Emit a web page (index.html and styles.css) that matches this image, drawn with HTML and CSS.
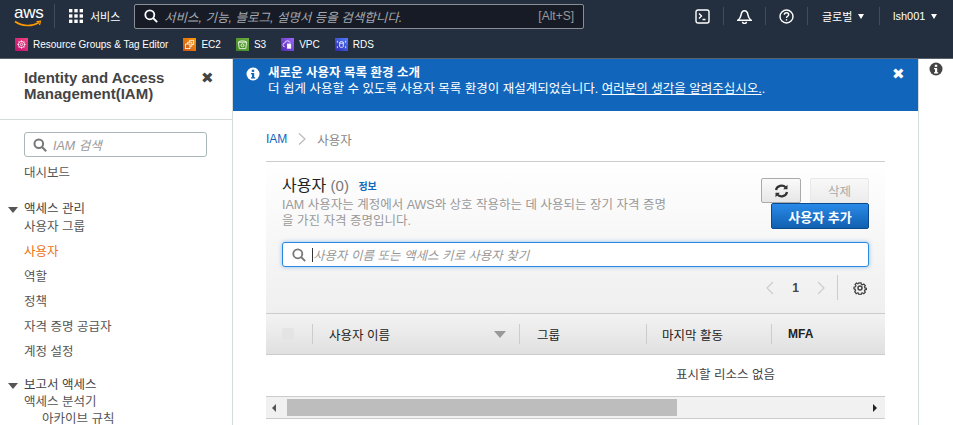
FILE: index.html
```html
<!DOCTYPE html>
<html lang="ko">
<head>
  <meta charset="UTF-8">
  <title>IAM 사용자</title>
  <link rel="stylesheet" href="styles.css">
</head>
<body>
  <!-- Top navigation -->
  <header class="topbar">
    <div class="toprow">
      <div class="logo">
        <span class="logo-text">aws</span>
        <svg class="logo-smile" width="28" height="8" viewBox="0 0 28 8"><path d="M1 1.5C8 6.5 18 6.8 25 2.5" fill="none" stroke="#f90" stroke-width="1.6"/><path d="M22.5 1.5L26.5 1.2 25.5 5" fill="none" stroke="#f90" stroke-width="1.2"/></svg>
      </div>
      <div class="services">
        <svg width="14" height="14" viewBox="0 0 14 14" fill="#fff"><rect x="0" y="0" width="3.4" height="3.4"/><rect x="5.3" y="0" width="3.4" height="3.4"/><rect x="10.6" y="0" width="3.4" height="3.4"/><rect x="0" y="5.3" width="3.4" height="3.4"/><rect x="5.3" y="5.3" width="3.4" height="3.4"/><rect x="10.6" y="5.3" width="3.4" height="3.4"/><rect x="0" y="10.6" width="3.4" height="3.4"/><rect x="5.3" y="10.6" width="3.4" height="3.4"/><rect x="10.6" y="10.6" width="3.4" height="3.4"/></svg>
        <span>서비스</span>
      </div>
      <div class="topsearch">
        <svg width="14" height="14" viewBox="0 0 14 14" fill="none" stroke="#fff" stroke-width="1.8"><circle cx="5.8" cy="5.8" r="4.5"/><path d="M9 9l4.2 4.2"/></svg>
        <span class="topsearch-text">서비스, 기능, 블로그, 설명서 등을 검색합니다.</span>
        <span class="shortcut">[Alt+S]</span>
      </div>
      <div class="topicons">
        <div class="topicon first">
          <svg width="15" height="15" viewBox="0 0 15 15" fill="none" stroke="#fff" stroke-width="1.4"><rect x="1" y="1" width="13" height="13" rx="2"/><path d="M4 4.5l2.5 2.5L4 9.5M7.5 10.5h3"/></svg>
        </div>
        <div class="topicon">
          <svg width="15" height="15" viewBox="0 0 15 15" fill="none" stroke="#fff" stroke-width="1.5"><path d="M1 11.2c2-1.4 2.6-2.5 3-5 .4-2.6 1.6-4.4 3.5-4.4s3.100 1.800 3.500 4.400c.4 2.500 1 3.600 3 5z"/><path d="M5.500 12.800a2 1.600 0 0 0 4 0"/></svg>
        </div>
        <div class="topicon">
          <svg width="15" height="15" viewBox="0 0 15 15" fill="none" stroke="#fff" stroke-width="1.400"><circle cx="7.500" cy="7.500" r="6.500"/><path d="M5.300 5.800c0-1.300 1-2.100 2.200-2.100s2.200.8 2.200 2c0 1.600-2.200 1.600-2.200 3.300"/><path d="M7.500 10.200v1.400"/></svg>
        </div>
        <div class="topmenu region">글로벌 <i class="caret"></i></div>
        <div class="topmenu user">lsh001 <i class="caret"></i></div>
      </div>
    </div>
    <div class="favorites">
      <a class="fav fav-rg"><svg width="12" height="12" viewBox="0 0 12 12" fill="none" stroke="#fff" stroke-width=".8"><circle cx="6" cy="6" r="3.500"/><circle cx="6" cy="6" r="1.300"/><path d="M6 1.500v2M6 8.500v2M1.500 6h2M8.500 6h2M2.800 2.800l1.400 1.400M7.800 7.800l1.400 1.400M9.200 2.800L7.800 4.200M4.200 7.800L2.800 9.200"/></svg>Resource Groups &amp; Tag Editor</a>
      <a class="fav fav-ec2"><svg width="12" height="12" viewBox="0 0 12 12" fill="none" stroke="#fff" stroke-width=".9"><rect x="1.500" y="5.500" width="5" height="5"/><path d="M4 5.500V3.500h4.500V8h-2"/><path d="M6 3.500V1.500h4.500V6H8.500"/></svg>EC2</a>
      <a class="fav fav-s3"><svg width="12" height="12" viewBox="0 0 12 12" fill="none" stroke="#fff" stroke-width=".9"><path d="M1.500 3.500h9l-1 7h-7zM1.500 3.500C3 1.500 9 1.500 10.500 3.500"/><circle cx="6" cy="6.800" r="1.600"/></svg>S3</a>
      <a class="fav fav-vpc"><svg width="12" height="12" viewBox="0 0 12 12" fill="none" stroke="#fff" stroke-width=".9"><path d="M3 8.500a2 2 0 0 1 0-4 3 3 0 0 1 5.800-.5"/><rect x="6" y="5.500" width="3.500" height="4.500" fill="#fff"/></svg>VPC</a>
      <a class="fav fav-rds"><svg width="12" height="12" viewBox="0 0 12 12" fill="none" stroke="#fff" stroke-width=".9"><ellipse cx="6" cy="3.800" rx="2" ry="1"/><path d="M4 3.800v4.400c0 1.300 4 1.300 4 0V3.800M1.500 2v2M1.500 8v2M10.500 2v2M10.500 8v2"/></svg>RDS</a>
    </div>
  </header>

  <div class="layout">
    <!-- Side navigation -->
    <nav class="sidenav">
      <div class="sidenav-head">
        <h2>Identity and Access Management(IAM)</h2>
        <span class="side-close">✖</span>
      </div>
      <div class="sidenav-body">
        <div class="side-search">
          <svg width="14" height="14" viewBox="0 0 14 14" fill="none" stroke="#777" stroke-width="2"><circle cx="5.800" cy="5.800" r="4.300"/><path d="M9 9l4.200 4.200"/></svg>
          <span>IAM 검색</span>
        </div>
        <a class="side-link dash">대시보드</a>
        <div class="side-section"><i class="side-caret"></i>액세스 관리</div>
        <a class="side-link first">사용자 그룹</a>
        <a class="side-link active">사용자</a>
        <a class="side-link">역할</a>
        <a class="side-link">정책</a>
        <a class="side-link">자격 증명 공급자</a>
        <a class="side-link">계정 설정</a>
        <div class="side-section report"><i class="side-caret"></i>보고서 액세스</div>
        <a class="side-link first">액세스 분석기</a>
        <a class="side-link sub">아카이브 규칙</a>
      </div>
    </nav>

    <main class="main">
      <!-- Flash message -->
      <div class="flash">
        <svg class="flash-icon" width="14" height="14" viewBox="0 0 14 14"><circle cx="7" cy="7" r="6.500" fill="#fff"/><rect x="5.800" y="2.700" width="2.400" height="2.200" fill="#1166bb"/><path d="M5 6h3.200v4.200h1v1.200H5v-1.200h1V7.200H5z" fill="#1166bb"/></svg>
        <div class="flash-body">
          <strong>새로운 사용자 목록 환경 소개</strong>
          <p>더 쉽게 사용할 수 있도록 사용자 목록 환경이 재설계되었습니다. <a>여러분의 생각을 알려주십시오.</a>.</p>
        </div>
        <span class="flash-close">✖</span>
      </div>

      <div class="content">
        <div class="crumbs"><a>IAM</a><svg width="10" height="14" viewBox="0 0 10 14" fill="none" stroke="#bbb" stroke-width="1.200"><path d="M2 1.500L8 7l-6 5.500"/></svg><span>사용자</span></div>

        <section class="panel">
          <div class="panel-head">
            <div class="panel-title">
              <h1>사용자 <span class="count">(0)</span> <a class="info">정보</a></h1>
              <p>IAM 사용자는 계정에서 AWS와 상호 작용하는 데 사용되는 장기 자격 증명<br>을 가진 자격 증명입니다.</p>
            </div>
            <div class="actions">
              <div class="actions-row">
                <button class="btn refresh"><svg width="15" height="14" viewBox="0 0 15 14" fill="none" stroke="#333" stroke-width="2.200"><path d="M2 6a5.600 5 0 0 1 9.800-2.500M13 8a5.600 5 0 0 1-9.800 2.500"/><path d="M13.500 .8v4.400H9.200zM1.500 13.200V8.800h4.300z" fill="#333" stroke="none"/></svg></button>
                <button class="btn disabled">삭제</button>
              </div>
              <button class="btn primary">사용자 추가</button>
            </div>
          </div>

          <div class="filter">
            <svg width="14" height="14" viewBox="0 0 14 14" fill="none" stroke="#777" stroke-width="1.800"><circle cx="5.800" cy="5.800" r="4.500"/><path d="M9 9l4.200 4.200"/></svg>
            <span class="cursor"></span>
            <span>사용자 이름 또는 액세스 키로 사용자 찾기</span>
          </div>

          <div class="pager">
            <svg width="10" height="14" viewBox="0 0 10 14" fill="none" stroke="#ccc" stroke-width="1.200"><path d="M8 1L2 7l6 6"/></svg>
            <span class="page-no">1</span>
            <svg width="10" height="14" viewBox="0 0 10 14" fill="none" stroke="#ccc" stroke-width="1.200"><path d="M2 1l6 6-6 6"/></svg>
            <span class="pager-sep"></span>
            <svg width="14" height="14" viewBox="0 0 14 14" fill="none" stroke="#444" stroke-width="1.500"><path d="M5.800 1h2.400l.4 1.700 1.300.6 1.500-.9 1.700 1.700-.9 1.500.5 1.300 1.700.4v1.400l-1.700.4-.5 1.300.9 1.500-1.700 1.700-1.500-.9-1.300.5-.4 1.700H5.800l-.4-1.700-1.300-.5-1.500.9L.9 11.300l.9-1.500-.5-1.300L0 8V6l1.700-.4.500-1.300-.9-1.500L3 1.100l1.500.9 1.300-.6z" transform="translate(1 1) scale(.86)"/><circle cx="7" cy="7" r="2"/></svg>
          </div>
        </section>

        <div class="table-head">
          <div class="th th-check"><span class="checkbox"></span></div>
          <div class="th th-name">사용자 이름<i class="sort"></i></div>
          <div class="th th-group">그룹</div>
          <div class="th th-last">마지막 활동</div>
          <div class="th th-mfa">MFA</div>
        </div>
        <div class="empty">표시할 리소스 없음</div>
        <div class="hscroll">
          <i class="arrow-left"></i>
          <div class="hscroll-track"><div class="hscroll-thumb"></div></div>
          <i class="arrow-right"></i>
        </div>
      </div>
    </main>

    <aside class="tools">
      <svg width="14" height="14" viewBox="0 0 14 14"><circle cx="7" cy="7" r="6.500" fill="#444"/><rect x="5.800" y="2.700" width="2.400" height="2.200" fill="#fff"/><path d="M5 6h3.200v4.200h1v1.200H5v-1.200h1V7.200H5z" fill="#fff"/></svg>
    </aside>
  </div>
</body>
</html>
```

FILE: styles.css
```css
* {
  box-sizing: border-box;
}
body {
  margin: 0;
  height: 425px;
  overflow: hidden;
  background-color: #fff;
  color: #444;
  font-family: "Liberation Sans", "Noto Sans CJK KR", sans-serif;
  font-size: 13px;
}
h1, h2, p {
  margin: 0;
}

/* Top bar */
.topbar {
  height: 59px;
  background-color: #232f3e;
  border-bottom: 1px solid #59616c;
  color: #fff;
}
.toprow {
  display: flex;
  align-items: center;
  height: 31px;
  padding-top: 1px;
}
.logo {
  width: 41px;
  height: 24px;
  margin: 0 14px;
  border-right: 1px solid #414b59;
}
.logo-text {
  display: block;
  font-size: 17px;
  line-height: 17px;
  letter-spacing: -.3px;
}
.logo-smile {
  display: block;
  margin-top: -1px;
}
.services {
  display: flex;
  align-items: center;
  gap: 7px;
  width: 65px;
  font-size: 11px;
}
.topsearch {
  display: flex;
  align-items: center;
  width: 450px;
  height: 25px;
  padding: 0 9px;
  background-color: #161b26;
  border: 1px solid #8a8f96;
  border-radius: 2px;
}
.topsearch-text {
  margin-left: 6px;
  flex: 1;
  color: #a5a9ae;
  font-style: italic;
  font-size: 12.5px;
}
.shortcut {
  color: #999;
  font-size: 12px;
}
.topicons {
  display: flex;
  align-items: center;
  margin-left: 97px;
}
.topicon {
  display: flex;
  justify-content: center;
  width: 42px;
  height: 18px;
  align-items: center;
  border-left: 1px solid #414b59;
}
.topicon.first {
  border-left: none;
}
.topmenu {
  display: flex;
  align-items: center;
  gap: 6px;
  height: 18px;
  border-left: 1px solid #414b59;
  font-size: 11px;
}
.region {
  width: 72px;
  padding-left: 14px;
}
.user {
  padding-left: 13px;
}
.caret {
  width: 0;
  height: 0;
  border-left: 3.5px solid transparent;
  border-right: 3.5px solid transparent;
  border-top: 5px solid #fff;
}
.favorites {
  display: flex;
  align-items: center;
  gap: 15px;
  height: 27px;
  padding-left: 15px;
}
.fav {
  display: flex;
  align-items: center;
  gap: 5px;
  font-size: 10px;
}
.fav svg {
  width: 13px;
  height: 13px;
  padding: 1px;
}
.fav-rg svg { background: linear-gradient(45deg, #bd0f6b, #f34482); }
.fav-ec2 svg { background: linear-gradient(45deg, #c8511b, #f90); }
.fav-s3 svg { background: linear-gradient(45deg, #3f8624, #6cae3e); }
.fav-vpc svg { background: linear-gradient(45deg, #4d27aa, #a166ff); }
.fav-rds svg { background: linear-gradient(45deg, #2e27ad, #527fff); }

/* Page layout */
.layout {
  display: flex;
  height: 366px;
}
.sidenav {
  width: 233px;
  flex-shrink: 0;
  border-right: 1px solid #d5dbdb;
}
.sidenav-head {
  display: flex;
  justify-content: space-between;
  height: 61px;
  padding: 11px 18px 0 24px;
  border-bottom: 1px solid #d5dbdb;
}
.sidenav-head h2 {
  width: 160px;
  color: #444;
  font-size: 15px;
  line-height: 16px;
}
.side-close {
  color: #444;
  font-size: 15px;
  line-height: 16px;
}
.sidenav-body {
  padding: 12px 25px 0 24px;
}
.side-search {
  display: flex;
  align-items: center;
  gap: 6px;
  height: 25px;
  padding-left: 8px;
  border: 1px solid #aab7b8;
  border-radius: 3px;
  color: #999;
  font-style: italic;
  font-size: 12.5px;
}
.side-link {
  display: block;
  height: 25px;
  line-height: 25px;
  color: #555;
  font-size: 12.5px;
  white-space: nowrap;
}
.side-link.dash {
  margin-top: 4px;
}
.side-link.first {
  height: 18px;
  line-height: 18px;
  margin-bottom: 4px;
}
.side-link.active {
  color: #ec7211;
}
.side-link.sub {
  height: 16px;
  line-height: 16px;
  margin-top: -4px;
  padding-left: 18px;
}
.side-section {
  position: relative;
  margin-top: 14px;
  height: 18px;
  line-height: 18px;
  color: #444;
  font-size: 12.5px;
}
.side-section.report {
  margin-top: 11px;
  height: 17px;
}
.side-caret {
  position: absolute;
  left: -16px;
  top: 7px;
  border-left: 5.5px solid transparent;
  border-right: 5.5px solid transparent;
  border-top: 6px solid #555;
}

/* Flash */
.main {
  flex: 1;
  min-width: 0;
}
.flash {
  display: flex;
  height: 52px;
  padding: 6px 15px 0 13px;
  background-color: #1166bb;
  color: #fff;
  font-size: 12.5px;
}
.flash-icon {
  margin-top: 2px;
  flex-shrink: 0;
}
.flash-body {
  flex: 1;
  margin-left: 8px;
  line-height: 16px;
}
.flash-body a {
  text-decoration: underline;
}
.flash-close {
  font-size: 15px;
  line-height: 18px;
  margin-right: -2px;
}

/* Content */
.content {
  width: 619px;
  margin-left: 33px;
}
.crumbs {
  display: flex;
  align-items: center;
  gap: 10px;
  height: 50px;
  padding-top: 6px;
  color: #888;
  font-size: 12.5px;
}
.crumbs a {
  color: #1166bb;
  font-size: 12px;
}
.panel {
  height: 152px;
  padding: 14px 16px 0;
  background: linear-gradient(#fff, #efefef);
  border-top: 1px solid #ccc;
}
.panel-head {
  display: flex;
  justify-content: space-between;
  height: 66px;
}
.panel-title {
  width: 390px;
}
.panel-title h1 {
  font-size: 16px;
  font-weight: normal;
  line-height: 20px;
  color: #222;
}
.count {
  color: #777;
  font-size: 15px;
}
.info {
  margin-left: 5px;
  color: #1166bb;
  font-size: 10px;
  font-weight: bold;
  vertical-align: 1px;
}
.panel-title p {
  color: #999;
  font-size: 12.5px;
  line-height: 16px;
  white-space: nowrap;
}
.actions {
  display: flex;
  flex-direction: column;
  align-items: flex-end;
  margin-top: 2px;
}
.actions-row {
  display: flex;
  gap: 9px;
}
.btn {
  height: 25px;
  padding: 0;
  border: 1px solid #aaa;
  border-radius: 2px;
  font-family: inherit;
  font-size: 12.5px;
}
.refresh {
  display: flex;
  align-items: center;
  justify-content: center;
  width: 40px;
  background: linear-gradient(#fafafa, #e6e6e6);
}
.disabled {
  width: 59px;
  border-color: #e8e8e8;
  background: linear-gradient(#f8f8f8, #ececec);
  color: #aaa;
}
.primary {
  width: 98px;
  height: 26px;
  background: linear-gradient(#2a8ae8, #1060b0);
  border-color: #0a4a8c;
  color: #fff;
  font-size: 13px;
  font-weight: bold;
}
.filter {
  display: flex;
  align-items: center;
  height: 25px;
  padding-left: 9px;
  background-color: #fff;
  border: 1px solid #2b88e0;
  border-radius: 3px;
  box-shadow: 0 0 4px rgba(43, 136, 224, .5);
  color: #999;
  font-style: italic;
  font-size: 12.5px;
}
.cursor {
  width: 1px;
  height: 14px;
  margin: 0 0 0 6px;
  background-color: #333;
}
.pager {
  display: flex;
  align-items: center;
  justify-content: flex-end;
  height: 25px;
  margin-top: 8px;
  padding-right: 2px;
}
.page-no {
  width: 41px;
  text-align: center;
  color: #444;
  font-size: 12px;
  font-weight: bold;
}
.pager-sep {
  height: 25px;
  margin: 0 15px 0 11px;
  border-left: 1px solid #ccc;
}

/* Table */
.table-head {
  display: flex;
  align-items: center;
  height: 42px;
  background: linear-gradient(#f3f3f3, #e0e0e0);
  border-top: 1px solid #ccc;
  border-bottom: 1px solid #ccc;
  color: #222;
  font-size: 12.5px;
}
.th {
  display: flex;
  align-items: center;
  height: 20px;
  border-left: 1px solid #ccc;
  white-space: nowrap;
}
.th-check {
  width: 46px;
  border-left: none;
  padding-left: 16px;
}
.th-name {
  width: 207px;
  padding: 0 13px 0 16px;
  justify-content: space-between;
}
.th-group {
  width: 127px;
  padding-left: 17px;
}
.th-last {
  width: 125px;
  padding-left: 15px;
}
.th-mfa {
  flex: 1;
  padding-left: 16px;
  font-size: 12px;
  font-weight: bold;
}
.checkbox {
  width: 12px;
  height: 12px;
  background-color: #e4e4e4;
  border-radius: 2px;
}
.sort {
  width: 0;
  height: 0;
  border-left: 6px solid transparent;
  border-right: 6px solid transparent;
  border-top: 7px solid #999;
}
.empty {
  height: 41px;
  line-height: 41px;
  padding-left: 410px;
  color: #444;
  font-size: 12.5px;
}
.hscroll {
  display: flex;
  align-items: center;
  height: 23px;
  background-color: #f1f1f1;
  border-top: 1px solid #ccc;
  border-bottom: 1px solid #ccc;
}
.hscroll-track {
  flex: 1;
  height: 17px;
  margin: 0 7px 0 11px;
}
.hscroll-thumb {
  width: 390px;
  height: 100%;
  background-color: #bdbdbd;
}
.arrow-left {
  margin-left: 6px;
  border-top: 4px solid transparent;
  border-bottom: 4px solid transparent;
  border-right: 4px solid #555;
}
.arrow-right {
  margin-right: 8px;
  border-top: 4px solid transparent;
  border-bottom: 4px solid transparent;
  border-left: 4px solid #222;
}

/* Right tools panel */
.tools {
  width: 35px;
  flex-shrink: 0;
  padding: 3px 0 0 10px;
  border-left: 1px solid #d5dbdb;
}
```
